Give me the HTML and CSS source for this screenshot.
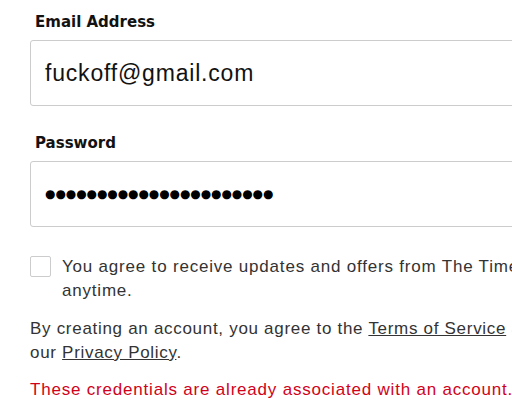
FILE: index.html
```html
<!DOCTYPE html>
<html>
<head>
<meta charset="utf-8">
<link rel="stylesheet" href="styles.css">
</head>
<body>
<form class="form">
  <label class="label">Email Address</label>
  <div class="input">fuckoff@gmail.com</div>
  <label class="label label-pw">Password</label>
  <div class="input input-pw">●●●●●●●●●●●●●●●●●●●●●●</div>
  <div class="check-row">
    <span class="box"></span>
    <p class="check-text">You agree to receive updates and offers from The Times. You may opt out anytime.</p>
  </div>
  <p class="terms">By creating an account, you agree to the <a href="#">Terms of Service</a> and acknowledge our <a href="#">Privacy Policy</a>.</p>
  <p class="error">These credentials are already associated with an account.<br><a href="#" class="login">Log in</a></p>
</form>
</body>
</html>
```
FILE: styles.css
```css
html, body {
  margin: 0;
  padding: 0;
  background: #fff;
  overflow: hidden;
  width: 512px;
  height: 406px;
}
.form {
  width: 650px;
  padding: 12px 0 0 30px;
  font-family: "Liberation Sans", Arial, sans-serif;
  color: #333;
}
.label {
  display: block;
  font-family: "DejaVu Sans", Verdana, sans-serif;
  font-weight: bold;
  font-size: 15px;
  color: #121212;
  padding-left: 5px;
  line-height: 20px;
  margin-bottom: 8px;
}
.label-pw {
  margin-top: 27px;
}
.input {
  box-sizing: border-box;
  height: 66px;
  border: 1px solid #ccc;
  border-radius: 3px;
  padding-left: 14px;
  font-size: 23px;
  letter-spacing: 0.8px;
  line-height: 64px;
  color: #121212;
}
.input-pw {
  font-family: "DejaVu Sans", sans-serif;
  font-size: 11.9px;
  letter-spacing: 0;
  color: #000;
}
.check-row {
  display: flex;
  align-items: flex-start;
  margin-top: 28px;
}
.box {
  flex: none;
  box-sizing: border-box;
  width: 21px;
  height: 21px;
  border: 1px solid #ccc;
  border-radius: 2px;
  margin-right: 11px;
  margin-top: 1px;
}
.check-text,
.terms,
.error {
  font-size: 17px;
  letter-spacing: 0.8px;
  line-height: 24px;
}
.check-text {
  margin: 0;
  color: #333;
}
.terms {
  width: 650px;
  margin: 14px 0 0;
  letter-spacing: 0.7px;
  color: #333;
}
.terms a {
  color: #333;
  text-decoration: underline;
}
.error {
  margin: 13px 0 0;
  color: #d0021b;
}
.login {
  color: #326891;
  text-decoration: none;
}
```
